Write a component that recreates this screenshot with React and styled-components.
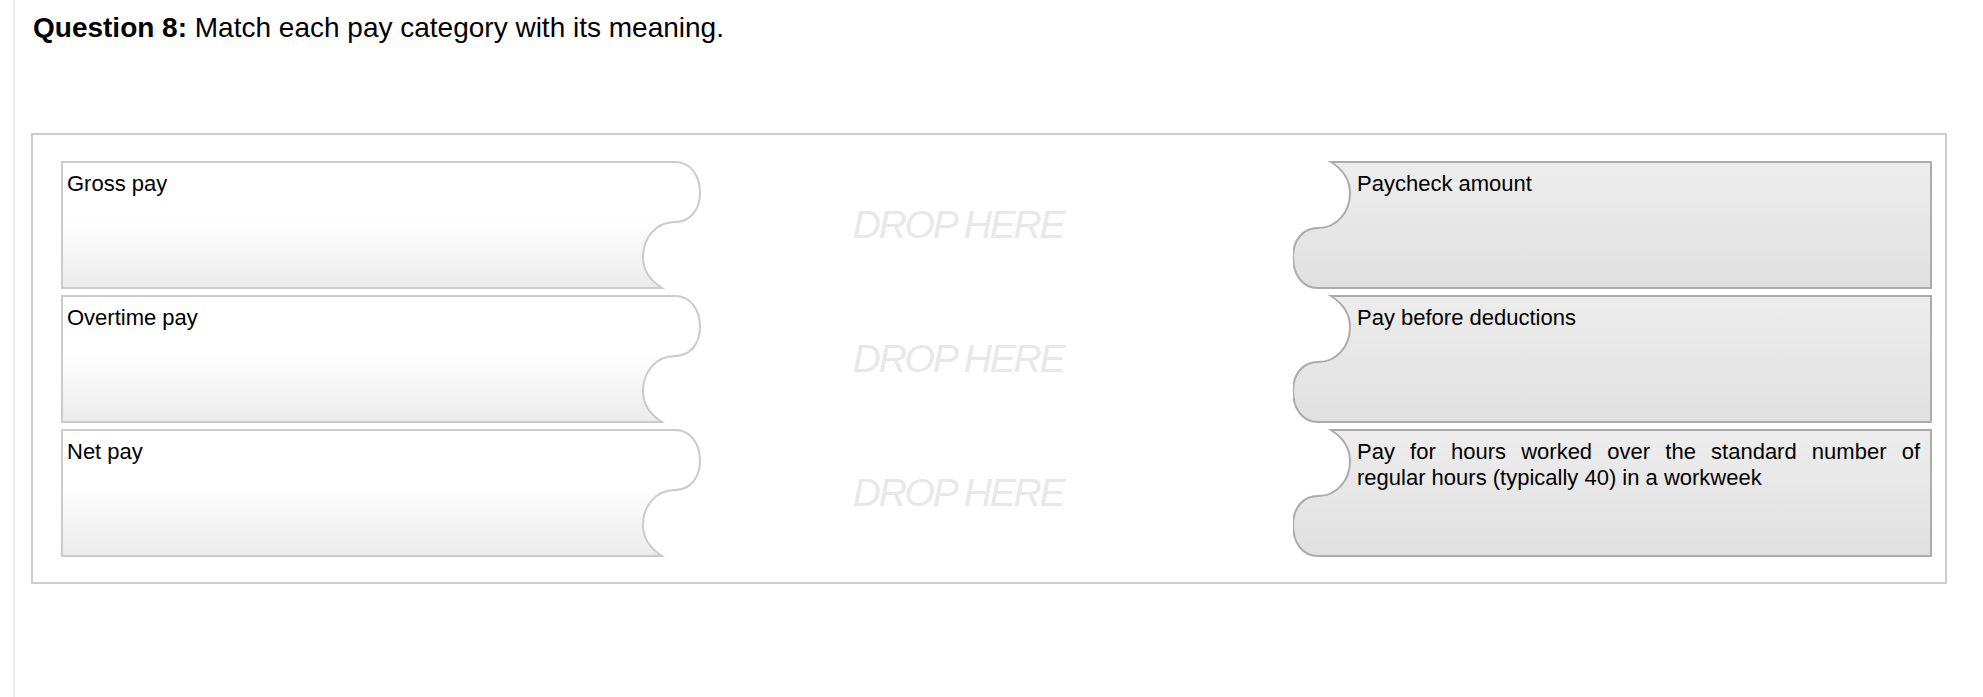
import styled, { createGlobalStyle } from "styled-components";

const GlobalStyle = createGlobalStyle`
    html, body {
        margin: 0;
        padding: 0;
        background: #fff;
    }
    body {
        font-family: "Liberation Sans", Arial, sans-serif;
        color: #000;
    }
`;

const Page = styled.div`
    margin-left: 13px;
    min-height: 697px;
    border-left: 2px solid #ececec;
    padding: 12px 36px 0 16px;
    box-sizing: border-box;
`;

const Heading = styled.h2`
    margin: 0 0 89px 2px;
    font-size: 28px;
    line-height: 32px;
    font-weight: 400;

    strong {
        font-weight: 700;
    }
`;

const Board = styled.div`
    width: 1916px;
    box-sizing: border-box;
    border: 2px solid #cdcdcd;
    padding: 26px 13px 25px 28px;
    display: flex;
    flex-direction: column;
    gap: 6px;
`;

const Row = styled.div`
    display: grid;
    grid-template-columns: 639px 1fr 639px;
    height: 128px;
`;

const Piece = styled.div`
    position: relative;
    height: 128px;
    font-size: 22px;
    line-height: 26px;
    padding: ${(p) => (p.$side === "right" ? "10px 12px 0 64px" : "10px 0 0 6px")};
    text-align: ${(p) => (p.$side === "right" ? "justify" : "left")};
    box-sizing: border-box;

    svg {
        position: absolute;
        inset: 0;
        z-index: 0;
    }

    span {
        position: relative;
        z-index: 1;
    }
`;

const DropZone = styled.div`
    display: flex;
    align-items: center;
    justify-content: center;
    padding-right: 77px;
    font-size: 39px;
    font-style: italic;
    letter-spacing: -2.2px;
    color: #e8e8e8;
`;

const PIECE_PATH =
    "M1,1 H614 C630,1 639,15 639,32 C639,50 628,61 614,61 C595,61 582,77 582,96 C582,110 590,120 601,127 H1 Z";

// the right piece is the left one turned half a turn, so its gradient runs upside down
const PieceShape = ({ side }) => {
    const right = side === "right";
    const id = right ? "gradRight" : "gradLeft";
    return (
        <svg width="640" height="128" viewBox="0 0 640 128">
            <defs>
                {right ? (
                    <linearGradient id={id} x1="0" y1="0" x2="0" y2="1">
                        <stop offset="0" stopColor="#e0e0e0" />
                        <stop offset="1" stopColor="#ededed" />
                    </linearGradient>
                ) : (
                    <linearGradient id={id} x1="0" y1="0" x2="0" y2="1">
                        <stop offset="0" stopColor="#ffffff" />
                        <stop offset="0.45" stopColor="#ffffff" />
                        <stop offset="1" stopColor="#ebebeb" />
                    </linearGradient>
                )}
            </defs>
            <path
                d={PIECE_PATH}
                transform={right ? "rotate(180 320 64) translate(1 0)" : undefined}
                fill={`url(#${id})`}
                stroke={right ? "#ababab" : "#cbcbcb"}
                strokeWidth="2"
            />
        </svg>
    );
};

const rows = [
    { term: "Gross pay", meaning: "Paycheck amount" },
    { term: "Overtime pay", meaning: "Pay before deductions" },
    {
        term: "Net pay",
        meaning:
            "Pay for hours worked over the standard number of regular hours (typically 40) in a workweek",
    },
];

const App = () => {
    return (
        <>
            <GlobalStyle />
            <Page>
                <Heading>
                    <strong>Question 8:</strong> Match each pay category with its meaning.
                </Heading>
                <Board>
                    {rows.map((r) => (
                        <Row key={r.term}>
                            <Piece $side="left">
                                <PieceShape side="left" />
                                <span>{r.term}</span>
                            </Piece>
                            <DropZone>DROP HERE</DropZone>
                            <Piece $side="right">
                                <PieceShape side="right" />
                                <span>{r.meaning}</span>
                            </Piece>
                        </Row>
                    ))}
                </Board>
            </Page>
        </>
    );
};

export default App;
